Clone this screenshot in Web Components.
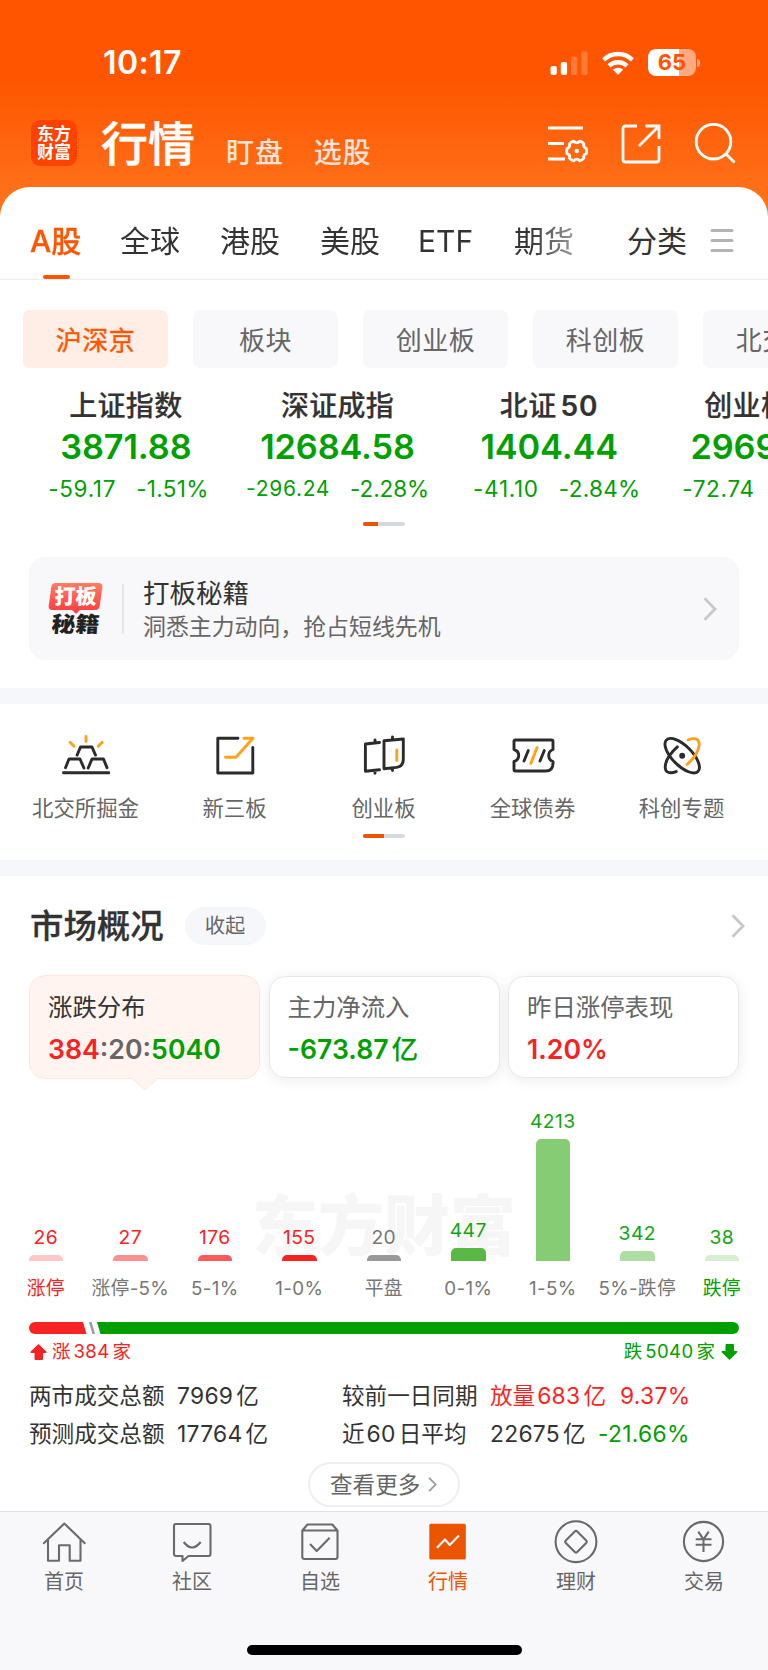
<!DOCTYPE html>
<html lang="zh-CN">
<head>
<meta charset="UTF-8">
<title>行情</title>
<style>
  body {
    margin: 0;
    background: #fff;
    font-family: Inter, "Noto Sans CJK SC", sans-serif;
    color: #333;
  }
</style>
</head>
<body>
<market-page></market-page>

<script>
// every element gets an open shadow root filled from its html() method
class BaseElement extends HTMLElement {
    constructor() {
        super();
        this.attachShadow({ mode: 'open' });
    }

    connectedCallback() {
        this.shadowRoot.innerHTML = `<style>* { box-sizing: border-box; } svg { display: block; flex: none; }</style>` + this.html();
    }

    attr(name, fallback = '') {
        return this.getAttribute(name) || fallback;
    }
}

class StatusBar extends BaseElement {
    html() {
        return `
      <style>
        :host { display: flex; height: 105px; padding: 46px 68px 0 103px; justify-content: space-between; color: #fff; }
        .time { font-size: 32px; font-weight: 600; line-height: 33px; letter-spacing: .4px; }
        .right { display: flex; height: 33px; align-items: center; }
        .wifi { margin: 0 14px 0 14px; }
        .battery {
          width: 48px; height: 27px; border-radius: 8px;
          background: linear-gradient(90deg, #fff 31px, rgba(255,255,255,.5) 31px);
          color: #ff5500; font-size: 22px; font-weight: 700; line-height: 27px; text-align: center;
        }
        .nub { width: 3px; height: 8px; margin-left: 1px; border-radius: 0 4px 4px 0; background: rgba(255,255,255,.5); }
      </style>
      <div class="time">10:17</div>
      <div class="right">
        <svg width="38" height="24" fill="#fff">
          <rect x="0.5" y="15" width="6.3" height="9" rx="2"/>
          <rect x="10.8" y="11" width="6.3" height="13" rx="2"/>
          <rect x="21" y="5.5" width="6.3" height="18.5" rx="2" opacity=".22"/>
          <rect x="31.3" y="0.5" width="6.3" height="23.5" rx="2" opacity=".22"/>
        </svg>
        <svg class="wifi" width="32" height="24" viewBox="0 0 32 24" fill="none" stroke="#fff" stroke-width="4.4">
          <path d="M1.6 8.9a20.6 20.6 0 0 1 28.8 0"/>
          <path d="M7 14.8a13 13 0 0 1 18 0"/>
          <path d="M16 23.8l-5.2-5a7.6 7.6 0 0 1 10.4 0z" fill="#fff" stroke="none"/>
        </svg>
        <div class="battery">65</div>
        <div class="nub"></div>
      </div>`;
    }
}
customElements.define('status-bar', StatusBar);

class AppHeader extends BaseElement {
    html() {
        return `
      <style>
        :host { display: flex; height: 82px; padding: 15px 32px 0 31px; color: #fff; }
        .logo {
          width: 46px; height: 46px; padding-top: 5px; border-radius: 9px; background: #ff4200;
          font-size: 17px; font-weight: 700; line-height: 18px; text-align: center;
        }
        h1 { margin: 0 0 0 24px; font-size: 47px; font-weight: 500; line-height: 47px; -webkit-text-stroke: .5px #fff; }
        .tab { margin-top: 19px; font-size: 28px; font-weight: 500; line-height: 28px; color: #ffe3d6; letter-spacing: .9px; }
        .tab.a { margin-left: 31px; }
        .tab.b { margin-left: 30px; }
        .icons { display: flex; gap: 33px; margin-left: auto; padding-top: 2px; }
      </style>
      <div class="logo">东方<br>财富</div>
      <h1>行情</h1>
      <div class="tab a">盯盘</div>
      <div class="tab b">选股</div>
      <div class="icons">
        <svg width="41" height="42" viewBox="-1 -3 41 42" fill="none" stroke="#fff" stroke-width="2.8">
          <path d="M0 3h35M0 18.500h16M0 34h17"/>
          <g transform="translate(28.700 26)" stroke-linejoin="round">
            <path d="M9.600-2.500Q10.300 0 9.600 2.500Q6.200 3.900 7.200 7.200Q5.500 9.300 2.900 9.800Q0 6.600-2.900 9.800Q-5.500 9.300-7.200 7.200Q-6.200 3.900-9.600 2.500Q-10.300 0-9.600-2.500Q-6.200-3.900-7.200-7.200Q-5.500-9.300-2.900-9.800Q0-6.600 2.900-9.800Q5.500-9.300 7.200-7.200Q6.200-3.900 9.600-2.500z"/>
            <circle r="2.2" fill="#fff" stroke="none"/>
          </g>
        </svg>
        <svg width="40" height="42" viewBox="0 -2 40 42" fill="none" stroke="#fff" stroke-width="2.8">
          <path d="M16 2H4.500Q2 2 2 4.500V35.500Q2 38 4.500 38H35.500Q38 38 38 35.500V22M24.500 2H38V15M18 22L38 2"/>
        </svg>
        <svg width="42" height="42" viewBox="0.500 0 42 42" fill="none" stroke="#fff" stroke-width="2.9">
          <circle cx="20" cy="19.7" r="17.3"/>
          <path d="M32 31.500l9 9"/>
        </svg>
      </div>`;
    }
}
customElements.define('app-header', AppHeader);

class MarketTabs extends BaseElement {
    html() {
        return `
      <style>
        :host { display: flex; height: 93px; padding: 0 34px 0 30px; border-bottom: 1px solid #ececec; font-size: 30px; line-height: 109px; }
        .strip {
          display: flex; gap: 40px; width: 570px; white-space: nowrap; overflow: hidden;
          -webkit-mask: linear-gradient(90deg, #000 500px, rgba(0,0,0,.3) 560px);
          mask: linear-gradient(90deg, #000 500px, rgba(0,0,0,.3) 560px);
        }
        .active { width: 50px; color: #ff5500; font-weight: 500; -webkit-text-stroke: .3px #ff5500; }
        .active::after { content: ""; display: block; width: 27px; height: 4px; margin: -21px 0 0 13px; border-radius: 2px; background: #ff5500; }
        .etf { width: 56px; margin-left: -2px; }
        .all { margin-left: 27px; width: 60px; }
        svg { margin: 41px 0 0 23px; }
      </style>
      <div class="strip">
        <div class="active">A股</div>
        <div>全球</div>
        <div>港股</div>
        <div>美股</div>
        <div class="etf">ETF</div>
        <div>期货</div>
      </div>
      <div class="all">分类</div>
      <svg width="24" height="26" stroke="#b3b3b3" stroke-width="3" stroke-linecap="round">
        <path d="M2 2.500h20M2 12.500h20M2 22.500h20"/>
      </svg>`;
    }
}
customElements.define('market-tabs', MarketTabs);

class MarketChip extends BaseElement {
    html() {
        return `
      <style>
        :host {
          display: block; flex: none; width: 145px; height: 58px; border-radius: 7px; background: #f8f8fa;
          font-size: 26px; line-height: 61px; text-align: center; color: #666; letter-spacing: .5px;
        }
        :host([active]) { background: #ffeee6; color: #ff5500; -webkit-text-stroke: .4px #ff5500; }
      </style>
      <slot></slot>`;
    }
}
customElements.define('market-chip', MarketChip);

class IndexQuote extends BaseElement {
    html() {
        return `
      <style>
        :host { display: block; flex: none; width: 211.7px; text-align: center; white-space: nowrap; }
        .name { height: 42px; font-size: 28px; line-height: 44px; font-weight: 500; letter-spacing: .3px; -webkit-text-stroke: .2px #333; }
        .value { height: 41px; font-size: 34.3px; line-height: 41px; font-weight: 600; color: #00a000; letter-spacing: -.1px; }
        .change {
          display: flex; justify-content: center; gap: 20px; height: 44px; padding-left: var(--shift, 0);
          font-size: 22.5px; line-height: 44px; color: #00a000; letter-spacing: var(--track, .3px);
        }
        .amount { font-size: var(--amount, 22.5px); letter-spacing: .7px; }
        ::slotted(span) { margin-left: 4px; font-weight: 600; letter-spacing: 1px; }
      </style>
      <div class="name"><slot></slot></div>
      <div class="value">${this.attr('value')}</div>
      <div class="change"><span class="amount">${this.attr('amount')}</span><span>${this.attr('percent')}</span></div>`;
    }
}
customElements.define('index-quote', IndexQuote);

class PagerLine extends BaseElement {
    html() {
        return `
      <style>
        :host { display: block; width: 42px; height: 4px; margin: 0 auto; border-radius: 2px; overflow: hidden; background: #d5d8de; }
        div { width: ${this.attr('done')}px; height: 4px; background: #eb5500; }
      </style>
      <div></div>`;
    }
}
customElements.define('pager-line', PagerLine);

class ChevronIcon extends BaseElement {
    html() {
        return `
      <style>:host { display: block; color: #c8c8c8; }</style>
      <svg width="${this.attr('width', 14)}" height="${this.attr('height', 24)}" viewBox="0 0 14 24" fill="none" stroke="currentColor" stroke-width="${this.attr('stroke', 2.8)}">
        <path d="M1.500 1.300L12 12L1.500 22.700"/>
      </svg>`;
    }
}
customElements.define('chevron-icon', ChevronIcon);

class PromoBanner extends BaseElement {
    html() {
        return `
      <style>
        :host { display: flex; align-items: center; height: 103px; margin: 0 29px; padding: 0 22px 0 19px; border-radius: 16px; background: #f8f8fb; }
        .badge { width: 55px; height: 52px; margin-top: 1px; font-weight: 900; text-align: center; }
        .top {
          width: 51px; height: 27px; margin-left: 2px; border-radius: 4px; transform: skewX(-8deg);
          background: linear-gradient(#ff7c62, #ff4242); color: #fff; font-size: 21px; line-height: 28px;
        }
        .top span { display: block; transform: skewX(6deg); }
        .tip { width: 0; height: 0; margin: 0 auto; border: 4px solid transparent; border-top-color: #ff4242; border-bottom: 0; }
        .bottom { margin-top: -1px; font-size: 24px; line-height: 24px; color: #222; transform: skewX(-4deg) scaleY(.9); }
        .rule { width: 2px; height: 50px; margin: 0 19px; background: #e6e6e9; }
        .text { flex: 1; white-space: nowrap; padding-top: 2px; }
        .title { font-size: 26.5px; line-height: 34px; }
        .sub { font-size: 22.9px; line-height: 34px; color: #666; }
      </style>
      <div class="badge">
        <div class="top"><span>打板</span></div>
        <div class="tip"></div>
        <div class="bottom">秘籍</div>
      </div>
      <div class="rule"></div>
      <div class="text">
        <div class="title"><slot></slot></div>
        <div class="sub"><slot name="sub"></slot></div>
      </div>
      <chevron-icon></chevron-icon>`;
    }
}
customElements.define('promo-banner', PromoBanner);

class ToolItem extends BaseElement {
    html() {
        return `
      <style>
        :host { display: block; width: 149px; text-align: center; font-size: 21.4px; line-height: 30px; color: #666; }
        .icon { width: 48px; height: 40px; margin: 0 auto 18px; }
      </style>
      <div class="icon"><slot name="icon"></slot></div>
      <slot></slot>`;
    }
}
customElements.define('tool-item', ToolItem);

class ToolGrid extends BaseElement {
    html() {
        return `
      <style>
        :host { display: block; height: 156px; padding-top: 31px; }
        .row { display: flex; margin: 0 0 11px 11px; }
        svg { fill: none; stroke: #2b2b2b; stroke-width: 2.9; stroke-linecap: round; stroke-linejoin: round; }
        .hot { stroke: #ffa11a; }
      </style>
      <div class="row">
        <tool-item>
          <svg slot="icon" width="48" height="40">
            <path d="M1.500 37.700H47M15.100 20.100L18.500 12H30L33.500 20.100M3.500 32.700L7 24H18L21.900 33M26.200 33L30 24H41.500L45 32.700"/>
            <path class="hot" d="M24 1.500V6.500M8 7.200L12 11.200M40.200 7.200L36.200 11.200"/>
          </svg>北交所掘金
        </tool-item>
        <tool-item>
          <svg slot="icon" width="48" height="40">
            <path d="M27 3.300H6.800V38H41.800V12.500"/>
            <path class="hot" d="M33 3.300H42L25 22.300H14.500"/>
          </svg>新三板
        </tool-item>
        <tool-item>
          <svg slot="icon" width="48" height="40">
            <path d="M19.500 7.500L5.400 9V36.300L19.500 34.800M15 5V8M15 35.500V38.300"/>
            <path d="M24 5.700L43.300 4V24Q43.300 31.500 36.500 32.400L24 33.700zM32.500 2V4.500M32.500 33.500V35.500"/>
            <path class="hot" d="M36.800 15V25.500"/>
          </svg>创业板
        </tool-item>
        <tool-item>
          <svg slot="icon" width="48" height="40">
            <path d="M6.500 5H42.500Q44 5 44 6.500V14.500Q39.700 16 39.700 20.500T44 26.500V28.500Q44 36 36.500 36H6.500Q5 36 5 34.500V26.500Q9.700 25 9.700 20.500T5 14.500V6.500Q5 5 6.500 5z"/>
            <path d="M19.300 15.500L15 26M35.300 15.500L31 26"/>
            <path class="hot" d="M28 12.700L21.800 28.500"/>
          </svg>全球债券
        </tool-item>
        <tool-item>
          <svg slot="icon" width="48" height="40">
            <g transform="translate(24.200 20.700)">
              <ellipse rx="22.3" ry="9.8" transform="rotate(45)"/>
              <g transform="rotate(-45)">
                <path d="M-15.400 7A22.300 9.800 0 0 1 2.800-9.700"/>
                <path class="hot" d="M15.400-7A22.300 9.800 0 0 1-2.800 9.700"/>
              </g>
              <circle r="1.5"/>
            </g>
          </svg>科创专题
        </tool-item>
      </div>
      <pager-line done="21"></pager-line>`;
    }
}
customElements.define('tool-grid', ToolGrid);

class StatCard extends BaseElement {
    html() {
        return `
      <style>
        :host {
          display: block; position: relative; width: 231px; height: 102px; margin-top: 1px; padding: 12px 0 0 18px;
          border: 1px solid #e9e9e9; border-radius: 16px; background: #fff; box-shadow: 0 2px 14px rgba(0,0,0,.08);
          color: #666; white-space: nowrap;
        }
        .title { font-size: 24.4px; line-height: 36px; }
        .value { font-size: 26.7px; line-height: 48px; font-weight: 600; }
        .arrow { display: none; }
        :host([active]) { height: 104px; margin-top: 0; padding: 13px 0 0 18px; background: #fff4ef; border-color: #ffe6da; box-shadow: none; }
        :host([active]) .title { color: #333; }
        :host([active]) .arrow { display: block; position: absolute; left: 102px; top: 101px; }
      </style>
      <div class="title"><slot></slot></div>
      <div class="value"><slot name="value"></slot></div>
      <svg class="arrow" width="26" height="13"><path d="M0 1L11.500 12Q13 13 14.500 12L26 1V0H0z" fill="#fff4ef"/><path d="M0 1L11.500 11.700Q13 12.700 14.500 11.700L26 1" fill="none" stroke="#ffe6da"/></svg>`;
    }
}
customElements.define('stat-card', StatCard);

class DistColumn extends BaseElement {
    html() {
        return `
      <style>
        :host { display: flex; flex-direction: column; justify-content: flex-end; align-items: center; width: 84.5px; flex: none; white-space: nowrap; color: var(--text); }
        .count { font-size: 19.3px; line-height: 24px; margin-bottom: 6px; letter-spacing: .4px; }
        .bar { width: 34.5px; height: ${this.attr('height')}px; border-radius: 5px 5px 0 0; background: ${this.attr('fill')}; }
        .label { margin-top: 13px; height: 28px; font-size: 18.8px; line-height: 29px; color: var(--label, #777); letter-spacing: .3px; }
      </style>
      <div class="count">${this.attr('count')}</div>
      <div class="bar"></div>
      <div class="label"><slot></slot></div>`;
    }
}
customElements.define('dist-column', DistColumn);

class DistChart extends BaseElement {
    html() {
        return `
      <style>
        :host { display: block; position: relative; height: 222px; --red: #f72222; --green: #00a000; }
        /* brand watermark lies behind the columns */
        .mark {
          position: absolute; left: 252px; top: 109px; font-size: 66px; line-height: 74px; font-weight: 900; color: #f6f6f6;
        }
        .cols { position: relative; display: flex; height: 222px; margin-left: 3.5px; }
        .up { --text: var(--red); }
        .down { --text: #12a512; }
        .flat { --text: #777; }
      </style>
      <div class="mark">东方财富</div>
      <div class="cols">
        <dist-column class="up" style="--label:#f72222" count="26" height="6" fill="#fdc8c8">涨停</dist-column>
        <dist-column class="up" count="27" height="6" fill="#fb9292">涨停-5%</dist-column>
        <dist-column class="up" count="176" height="6" fill="#fa5a5a">5-1%</dist-column>
        <dist-column class="up" count="155" height="6" fill="#f72222">1-0%</dist-column>
        <dist-column class="flat" count="20" height="6" fill="#999">平盘</dist-column>
        <dist-column class="down" count="447" height="13" fill="#5ab944">0-1%</dist-column>
        <dist-column class="down" count="4213" height="122" fill="#85cc75">1-5%</dist-column>
        <dist-column class="down" count="342" height="10" fill="#addda3">5%-跌停</dist-column>
        <dist-column class="down" style="--label:#00a000" count="38" height="6" fill="#d6efd1">跌停</dist-column>
      </div>`;
    }
}
customElements.define('dist-chart', DistChart);

class RatioBar extends BaseElement {
    html() {
        return `
      <style>
        :host { display: block; margin: 20px 29px 0; font-size: 18.5px; line-height: 35px; }
        .ends { display: flex; justify-content: space-between; align-items: center; height: 35px; }
        .ends div { display: flex; align-items: center; }
        .rise { color: #f72222; gap: 5px; }
        .fall { color: #00a000; gap: 6px; }
        .n { margin: 0 3px; letter-spacing: .4px; }
      </style>
      <svg width="710" height="12">
        <path d="M6 0H54L57.500 12H6A6 6 0 0 1 6 0z" fill="#f72222"/>
        <path d="M60 0h2.500L66 12h-2.500z" fill="#999"/>
        <path d="M68 0H704A6 6 0 0 1 704 12H71.500z" fill="#00a000"/>
      </svg>
      <div class="ends">
        <div class="rise">
          <svg width="18" height="18"><path d="M9.500 1L17.500 8.800Q18 10 16.500 10H14V16Q14 17 13 17H6.500Q5.500 17 5.500 16V10H2.500Q1 10 1.500 8.800z" fill="#f72222"/></svg>
          <span>涨<span class="n">384</span>家</span>
        </div>
        <div class="fall">
          <span>跌<span class="n">5040</span>家</span>
          <svg width="18" height="18"><path d="M8.500 17L0.700 9.200Q0 8 1.500 8H4.500V2Q4.500 1 5.500 1H12Q13 1 13 2V8H15.500Q17 8 16.300 9.200z" fill="#00a000"/></svg>
        </div>
      </div>`;
    }
}
customElements.define('ratio-bar', RatioBar);

class TurnoverTable extends BaseElement {
    html() {
        return `
      <style>
        :host {
          display: grid; grid-template-columns: 148px 165px 148px 130px auto; grid-auto-rows: 38px;
          margin: 8px 0 0 29px; font-size: 22.6px; line-height: 38px; white-space: nowrap;
        }
        .n { margin-right: 3px; letter-spacing: .3px; font-size: 22.8px; }
        .m { margin-left: 2px; }
        .pct { font-size: 22.8px; letter-spacing: .3px; }
        .red { color: #ff1f1f; }
        .green { color: #00a000; }
        .pct.green { margin-left: -22px; }
      </style>
      <span>两市成交总额</span><span><span class="n">7969</span>亿</span>
      <span>较前一日同期</span><span class="red">放量<span class="n m">683</span>亿</span><span class="red pct">9.37%</span>
      <span>预测成交总额</span><span><span class="n">17764</span>亿</span>
      <span>近<span class="n m">60</span>日平均</span><span><span class="n">22675</span>亿</span><span class="green pct">-21.66%</span>`;
    }
}
customElements.define('turnover-table', TurnoverTable);

class MoreButton extends BaseElement {
    html() {
        return `
      <style>
        :host {
          display: flex; align-items: center; width: 152px; height: 45px; margin: 9px auto 0; padding-left: 20px;
          border: 2px solid #efefef; border-radius: 23px; font-size: 22.6px; line-height: 41px; color: #666; gap: 8px; white-space: nowrap;
        }
        chevron-icon { color: #999; }
      </style>
      <slot></slot><chevron-icon width="9" height="15" stroke="2.8"></chevron-icon>`;
    }
}
customElements.define('more-button', MoreButton);

class NavItem extends BaseElement {
    html() {
        return `
      <style>
        :host { display: block; width: 128px; text-align: center; color: #666; font-size: 20px; line-height: 28px; }
        :host([active]) { color: #eb5500; }
        .icon { width: 44px; height: 44px; margin: 0 auto 4px; }
      </style>
      <div class="icon"><slot name="icon"></slot></div>
      <slot></slot>`;
    }
}
customElements.define('nav-item', NavItem);

class BottomNav extends BaseElement {
    html() {
        return `
      <style>
        :host { display: block; height: 159px; padding-top: 8px; border-top: 1px solid #dfe0e2; background: #f8f8fb; }
        nav { display: flex; height: 125px; }
        svg { fill: none; stroke: #6a6a6a; stroke-width: 2.1; stroke-linejoin: round; }
        .home { width: 275px; height: 10px; margin: 0 auto; border-radius: 5px; background: #000; }
      </style>
      <nav>
        <nav-item>
          <svg slot="icon" width="44" height="44">
            <path d="M1.300 23.700L22.300 3.500L43.300 23.700M6 20V40.700H17V25.300H27.700V40.700H38.500V20"/>
          </svg>首页
        </nav-item>
        <nav-item>
          <svg slot="icon" width="44" height="44">
            <path d="M5.700 4H38.500Q40.500 4 40.500 6V34Q40.500 36 38.500 36H18.500L12.500 41V36H6Q4 36 4 34V6Q4 4 5.700 4z"/>
            <path d="M13.700 22Q22 33 30.700 22"/>
          </svg>社区
        </nav-item>
        <nav-item>
          <svg slot="icon" width="44" height="44">
            <path d="M4.300 10.500L9.500 4.500H34.300L39.500 10.500V37Q39.500 39 37.500 39H6.300Q4.300 39 4.300 37zH39.500M12 24L18.700 31L31.700 17.700"/>
          </svg>自选
        </nav-item>
        <nav-item active>
          <svg slot="icon" width="44" height="44">
            <rect x="3.3" y="3.7" width="36.5" height="35.7" rx="1.5" fill="#eb5500" stroke="none"/>
            <path d="M11 27.700L19 19.500L23.700 25L33 15.500" stroke="#fff"/>
          </svg>行情
        </nav-item>
        <nav-item>
          <svg slot="icon" width="44" height="44">
            <circle cx="22" cy="21.7" r="20.4"/>
            <path d="M20.800 11.500Q22 10.300 23.200 11.500L32.200 20.500Q33.400 21.700 32.200 22.900L23.200 31.900Q22 33.100 20.800 31.900L11.800 22.900Q10.600 21.700 11.800 20.500z"/>
          </svg>理财
        </nav-item>
        <nav-item>
          <svg slot="icon" width="44" height="44">
            <circle cx="21.5" cy="21.5" r="19.6"/>
            <path d="M16.300 11.700L21.500 19.300L26.700 11.700M13.700 19.300H29.500M13.700 24.700H29.500M21.500 19.300V32"/>
          </svg>交易
        </nav-item>
      </nav>
      <div class="home"></div>`;
    }
}
customElements.define('bottom-nav', BottomNav);

class MarketPage extends BaseElement {
    html() {
        return `
      <style>
        :host { display: block; width: 768px; height: 1670px; overflow: hidden; background: linear-gradient(#ff5500 80px, #ff6f18 187px, #ff741e 230px); }
        main { height: 1324px; border-radius: 30px 30px 0 0; background: #fff; overflow: hidden; }
        .chips { display: flex; gap: 25px; padding: 30px 0 0 23px; height: 104px; }
        .quotes { display: flex; height: 138px; margin-left: 20px; }
        .promo { padding-top: 31px; height: 162px; }
        .band { height: 16px; background: #f6f7fa; }
        .head { display: flex; align-items: center; height: 99px; padding: 0 23px 0 30px; }
        h2 { margin: 0; font-size: 33.4px; font-weight: 500; line-height: 50px; -webkit-text-stroke: .3px #333; }
        .pill { width: 81px; height: 38px; margin: 0 auto 0 21px; border-radius: 19px; background: #f6f7fa; font-size: 20.3px; line-height: 38px; text-align: center; color: #666; }
        .cards { display: flex; justify-content: space-between; height: 105px; padding: 0 29px; }
        .unit { margin-left: 3px; font-weight: 500; }
        .red { color: #f72222; }
        .green { color: #00a000; }
      </style>
      <status-bar></status-bar>
      <app-header></app-header>
      <main>
        <market-tabs></market-tabs>
        <div class="chips">
          <market-chip active>沪深京</market-chip>
          <market-chip>板块</market-chip>
          <market-chip>创业板</market-chip>
          <market-chip>科创板</market-chip>
          <market-chip>北交所</market-chip>
        </div>
        <div class="quotes">
          <index-quote value="3871.88" amount="-59.17" percent="-1.51%" style="--shift:5px">上证指数</index-quote>
          <index-quote value="12684.58" amount="-296.24" percent="-2.28%" style="--amount:21px;--track:-.1px">深证成指</index-quote>
          <index-quote value="1404.44" amount="-41.10" percent="-2.84%" style="--shift:15px">北证<span>50</span></index-quote>
          <index-quote value="2969.00" amount="-72.74" percent="-2.39%" style="--shift:16px">创业板指</index-quote>
        </div>
        <pager-line done="15"></pager-line>
        <div class="promo">
          <promo-banner>打板秘籍<span slot="sub">洞悉主力动向，抢占短线先机</span></promo-banner>
        </div>
        <div class="band"></div>
        <tool-grid></tool-grid>
        <div class="band"></div>
        <div class="head">
          <h2>市场概况</h2>
          <div class="pill">收起</div>
          <chevron-icon></chevron-icon>
        </div>
        <div class="cards">
          <stat-card active>涨跌分布<span slot="value"><span class="red">384</span>:20:<span class="green">5040</span></span></stat-card>
          <stat-card>主力净流入<span slot="value" class="green">-673.87<span class="unit">亿</span></span></stat-card>
          <stat-card>昨日涨停表现<span slot="value" class="red">1.20%</span></stat-card>
        </div>
        <dist-chart></dist-chart>
        <ratio-bar></ratio-bar>
        <turnover-table></turnover-table>
        <more-button>查看更多</more-button>
      </main>
      <bottom-nav></bottom-nav>`;
    }
}
customElements.define('market-page', MarketPage);
</script>
</body>
</html>
